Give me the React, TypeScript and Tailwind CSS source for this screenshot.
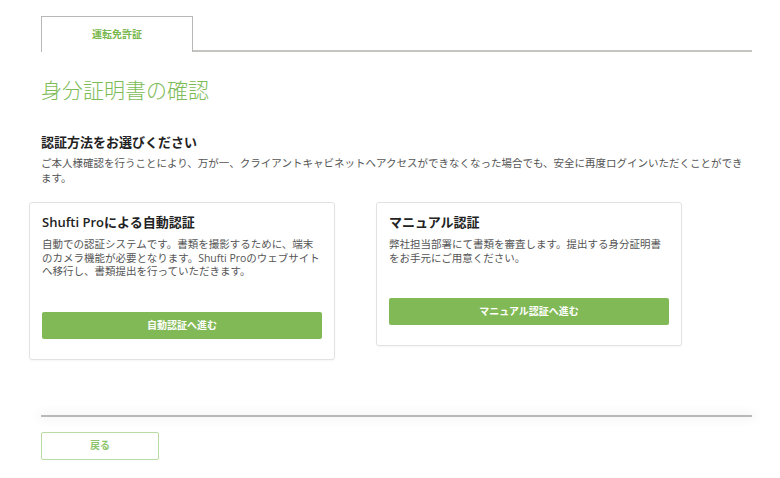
import React from 'react';

const FONT = '"Open Sans", "Noto Sans CJK JP", sans-serif';

interface MethodCardProps {
    title: string;
    lines: string[];
    action: string;
}

const MethodCard: React.FC<MethodCardProps> = ({ title, lines, action }) => {
    return (
        <div className="w-[306px] rounded-[3px] border border-[#e2e2e2] bg-white px-3 pt-[10px] pb-[20px] shadow-[0_1px_2px_rgba(0,0,0,0.04)]">
            <h3 className="text-[13px] leading-[18px] font-semibold text-[#222]">{title}</h3>
            <p className="mt-[7px] text-[10.5px] leading-[13.5px] text-[#555]">
                {lines.map((l, i) => (
                    <React.Fragment key={i}>
                        {l}
                        {i < lines.length - 1 && <br />}
                    </React.Fragment>
                ))}
            </p>
            <button className="mt-[33px] flex h-[27px] w-full items-center justify-center rounded-[2px] bg-[#81b956] text-[10px] font-bold text-white">
                {action}
            </button>
        </div>
    );
};

export default function App() {
    return (
        <div className="min-h-[478px] w-[780px] bg-white pt-4 pl-[41px] pr-[28px]" style={{ fontFamily: FONT }}>
            {/* Tabs */}
            <div className="flex h-[36px]">
                <div className="flex w-[152px] items-center justify-center border-x border-t border-[#b8b8b8] bg-white">
                    <span className="text-[10px] font-bold text-[#79b84e]">運転免許証</span>
                </div>
                <div className="flex-1 border-b-2 border-[#c4c4c0]"></div>
            </div>

            <h1 className="mt-[24px] text-[21px] leading-[28px] font-light text-[#7dbb57]">身分証明書の確認</h1>

            <h2 className="mt-[29px] text-[13px] leading-[18px] font-bold text-[#222]">認証方法をお選びください</h2>
            <p className="mt-[5px] text-[10.5px] leading-[15px] text-[#555]">
                ご本人様確認を行うことにより、万が一、クライアントキャビネットへアクセスができなくなった場合でも、安全に再度ログインいただくことができます。
            </p>

            {/* Method cards */}
            <div className="-ml-3 mt-[16px] flex items-start gap-[41px]">
                <MethodCard
                    title="Shufti Proによる自動認証"
                    lines={[
                        '自動での認証システムです。書類を撮影するために、端末',
                        'のカメラ機能が必要となります。Shufti Proのウェブサイト',
                        'へ移行し、書類提出を行っていただきます。',
                    ]}
                    action="自動認証へ進む"
                />
                <MethodCard
                    title="マニュアル認証"
                    lines={[
                        '弊社担当部署にて書類を審査します。提出する身分証明書',
                        'をお手元にご用意ください。',
                    ]}
                    action="マニュアル認証へ進む"
                />
            </div>

            <div className="mt-[55px] h-[2px] bg-[#b9b9b9] shadow-[0_0_10px_4px_rgba(0,0,0,0.035)]"></div>

            <button className="mt-[15px] flex h-[28px] w-[118px] items-center justify-center rounded-[2px] border border-[#b9dca5] bg-white text-[10px] font-bold text-[#8cc46c]">
                戻る
            </button>
        </div>
    );
}
